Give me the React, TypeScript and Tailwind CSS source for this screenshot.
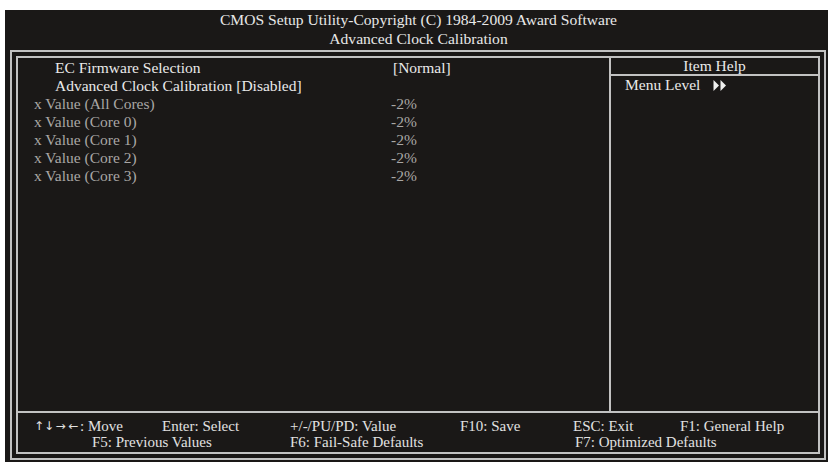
const rows = [
  { label: "x Value (All Cores)", value: "-2%" },
  { label: "x Value (Core 0)", value: "-2%" },
  { label: "x Value (Core 1)", value: "-2%" },
  { label: "x Value (Core 2)", value: "-2%" },
  { label: "x Value (Core 3)", value: "-2%" },
];

const DoubleArrow = () => (
  <svg width="14" height="11" viewBox="0 0 14 11" className="inline-block">
    <polygon points="0.5,0 6,5.5 0.5,11" fill="#f0f0f0" />
    <polygon points="7.5,0 13,5.5 7.5,11" fill="#f0f0f0" />
  </svg>
);

export default function App() {
  return (
    <div className="w-[831px] h-[462px] bg-white pl-[5px] pt-[10px] font-['Liberation_Serif',serif]">
      <div className="w-[823px] h-[452px] bg-[#1a1817] flex flex-col">
        {/* title */}
        <div className="h-[40px] text-center text-[15.6px] leading-[19px] text-[#e8e8e8]">
          <div className="pl-[4px]">CMOS Setup Utility-Copyright (C) 1984-2009 Award Software</div>
          <div className="pl-[4px]">Advanced Clock Calibration</div>
        </div>

        <div className="ml-[5px] w-[816px] h-[410px] border-2 border-[#c2c2c2] p-[4px]">
          <div className="h-full border-2 border-[#c2c2c2] flex flex-col">
            <div className="flex-1 flex text-[15.5px] leading-[18px]">
              {/* settings list */}
              <div className="w-[591px] pt-px">
                <div className="flex text-[#eaeaea]">
                  <div className="w-[373px] pl-[37px]">EC Firmware Selection</div>
                  <div className="pl-[2px]">[Normal]</div>
                </div>
                <div className="flex text-[#eaeaea]">
                  <div className="pl-[37px] whitespace-nowrap">
                    Advanced Clock Calibration [Disabled]
                  </div>
                </div>
                {rows.map((r) => (
                  <div key={r.label} className="flex text-[#a9a7a5]">
                    <div className="w-[373px] pl-[16px]">{r.label}</div>
                    <div>{r.value}</div>
                  </div>
                ))}
              </div>

              {/* item help */}
              <div className="flex-1 border-l-2 border-[#c2c2c2]">
                <div className="h-[18px] border-b-2 border-[#c2c2c2] text-center leading-[16px] text-[#eaeaea]">
                  Item Help
                </div>
                <div className="pl-[14px] pt-px leading-[16px] text-[#eaeaea] flex items-center gap-[13px]">
                  <span>Menu Level</span>
                  <DoubleArrow />
                </div>
              </div>
            </div>

            {/* key legend */}
            <div className="h-[41px] border-t-2 border-[#c2c2c2] pt-[5px] text-[15px] leading-[16px] text-[#e2e2e2] whitespace-nowrap">
              <div className="flex pl-[16px]">
                <span className="w-[128px] flex">
                  <span className="flex font-['DejaVu_Sans',sans-serif] text-[12px]">
                    <span className="w-[10px] text-center">↑</span>
                    <span className="w-[10px] text-center">↓</span>
                    <span className="w-[13px] text-center">→</span>
                    <span className="w-[13px] text-center">←</span>
                  </span>
                  <span>: Move</span>
                </span>
                <span className="w-[128px]">Enter: Select</span>
                <span className="w-[170px]">+/-/PU/PD: Value</span>
                <span className="w-[113px]">F10: Save</span>
                <span className="w-[107px]">ESC: Exit</span>
                <span>F1: General Help</span>
              </div>
              <div className="flex pl-[74px]">
                <span className="w-[198px]">F5: Previous Values</span>
                <span className="w-[285px]">F6: Fail-Safe Defaults</span>
                <span>F7: Optimized Defaults</span>
              </div>
            </div>
          </div>
        </div>
      </div>
    </div>
  );
}
